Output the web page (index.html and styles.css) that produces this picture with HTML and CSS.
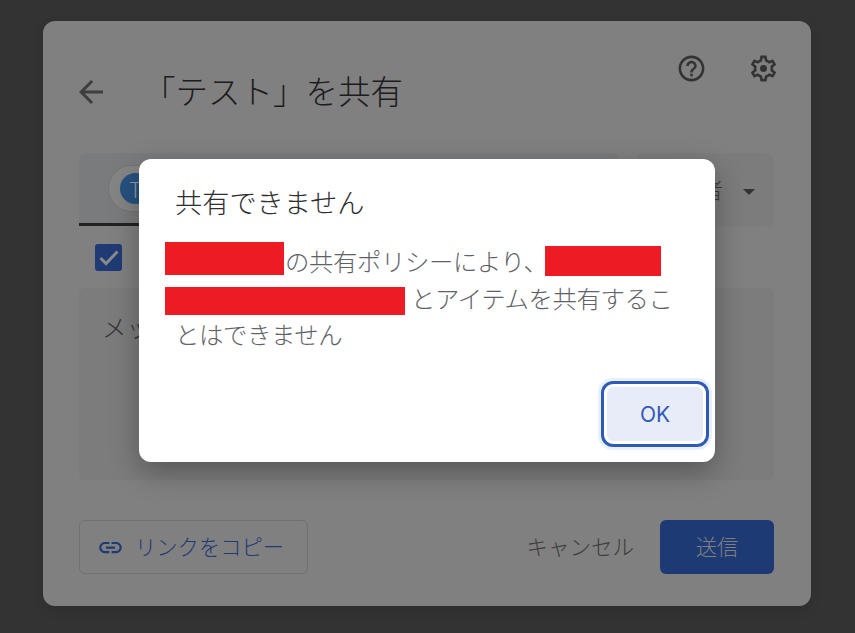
FILE: index.html
```html
<!DOCTYPE html>
<html lang="ja">
<head>
<meta charset="utf-8">
<title>「テスト」を共有</title>
<link rel="stylesheet" href="styles.css">
</head>
<body>
<main class="card">
  <header class="header">
    <div class="heading">
      <svg class="icon-back" viewBox="0 0 24 24"><path d="M20 11H7.830l5.590-5.590L12 4l-8 8 8 8 1.410-1.410L7.830 13H20v-2z"/></svg>
      <h1 class="title">「テスト」を共有</h1>
    </div>
    <div class="actions">
      <svg class="icon-action" viewBox="0 0 24 24"><path d="M11 18h2v-2h-2v2zm1-16C6.480 2 2 6.480 2 12s4.480 10 10 10 10-4.480 10-10S17.520 2 12 2zm0 18c-4.410 0-8-3.590-8-8s3.590-8 8-8 8 3.590 8 8-3.590 8-8 8zm0-14c-2.210 0-4 1.790-4 4h2c0-1.100.9-2 2-2s2 .9 2 2c0 2-3 1.750-3 5h2c0-2.250 3-2.500 3-5 0-2.210-1.790-4-4-4z"/></svg>
      <svg class="icon-action" viewBox="0 0 24 24"><path d="M19.43 12.98c.04-.32.07-.64.07-.98 0-.34-.03-.66-.07-.98l2.11-1.65c.19-.15.24-.42.12-.64l-2-3.46c-.09-.16-.26-.25-.44-.25-.06 0-.12.01-.17.03l-2.49 1c-.52-.4-1.08-.73-1.69-.98l-.38-2.65C14.46 2.18 14.25 2 14 2h-4c-.25 0-.46.18-.49.42l-.38 2.65c-.61.25-1.17.59-1.69.98l-2.49-1c-.06-.02-.12-.03-.18-.03-.17 0-.34.09-.43.25l-2 3.46c-.13.22-.07.49.12.64l2.11 1.65c-.04.32-.07.65-.07.98 0 .33.03.66.07.98l-2.11 1.65c-.19.15-.24.42-.12.64l2 3.46c.09.16.26.25.44.25.06 0 .12-.01.17-.03l2.49-1c.52.4 1.08.73 1.69.98l.38 2.65c.03.24.24.42.49.42h4c.25 0 .46-.18.49-.42l.38-2.65c.61-.25 1.17-.59 1.69-.98l2.49 1c.06.02.12.03.18.03.17 0 .34-.09.43-.25l2-3.46c.12-.22.07-.49-.12-.64l-2.11-1.65zm-1.98-1.71c.04.31.05.52.05.73 0 .21-.02.43-.05.73l-.14 1.13.89.7 1.08.84-.7 1.21-1.27-.51-1.04-.42-.9.68c-.43.32-.84.56-1.25.73l-1.06.43-.16 1.13-.2 1.35h-1.4l-.19-1.35-.16-1.13-1.06-.43c-.43-.18-.83-.41-1.23-.71l-.91-.7-1.06.43-1.27.51-.7-1.21 1.08-.84.89-.7-.14-1.13c-.03-.31-.05-.54-.05-.74s.02-.43.05-.73l.14-1.13-.89-.7-1.08-.84.7-1.21 1.27.51 1.04.42.9-.68c.43-.32.84-.56 1.25-.73l1.06-.43.16-1.13.2-1.35h1.39l.19 1.35.16 1.13 1.06.43c.43.18.83.41 1.23.71l.91.7 1.06-.43 1.27-.51.7 1.21-1.07.85-.89.7.14 1.13z"/><circle cx="12" cy="12" r="2.700"/></svg>
    </div>
  </header>

  <section class="recipients">
    <div class="field">
      <div class="chip"><span class="avatar">T</span></div>
    </div>
    <div class="role">
      <span class="role-text">編集者</span>
      <span class="caret"></span>
    </div>
  </section>

  <div class="notify">
    <span class="checkbox">
      <svg class="check" viewBox="0 0 27 27"><path d="M5.500 14l5.500 5.500L22.500 7.500"/></svg>
    </span>
  </div>

  <div class="message">メッセージ</div>

  <footer class="footer">
    <button class="copy-link">
      <svg class="icon-link" viewBox="0 0 24 24"><path d="M3.900 12c0-1.710 1.390-3.100 3.100-3.100h4V7H7c-2.760 0-5 2.240-5 5s2.240 5 5 5h4v-1.900H7c-1.710 0-3.100-1.390-3.100-3.100zM8 13h8v-2H8v2zm9-6h-4v1.900h4c1.710 0 3.100 1.390 3.100 3.100s-1.390 3.100-3.100 3.100h-4V17h4c2.760 0 5-2.240 5-5s-2.240-5-5-5z"/></svg>
      <span class="label">リンクをコピー</span>
    </button>
    <div class="footer-actions">
      <button class="cancel"><span class="label">キャンセル</span></button>
      <button class="send"><span class="label">送信</span></button>
    </div>
  </footer>

  <div class="modal" role="dialog">
    <h2 class="modal-title">共有できません</h2>
    <p class="modal-body"><span class="redact redact-a"></span>の共有ポリシーにより、<span class="redact redact-b"></span><br><span class="redact redact-c"></span>とアイテムを共有するこ<br>とはできません</p>
    <div class="modal-actions">
      <button class="ok">OK</button>
    </div>
  </div>
</main>
</body>
</html>
```

FILE: styles.css
```css
* {
  box-sizing: border-box;
}

html,
body {
  height: 100%;
}

body {
  margin: 0;
  padding: 21px 44px 27px 43px;
  background: #333;
  overflow: hidden;
  font-family: "Noto Sans CJK JP", "Noto Sans", sans-serif;
  font-weight: 300;
}

button {
  font: inherit;
  border: 0;
  background: none;
  padding: 0;
}

.label {
  display: block;
  margin-top: -4px;
}

.card {
  position: relative;
  width: 768px;
  height: 585px;
  padding: 30px 37px 32px 36px;
  background: #808080;
  border-radius: 12px;
  box-shadow: 0 4px 12px rgba(0, 0, 0, 0.12);
}

.header {
  display: flex;
  justify-content: space-between;
  height: 102px;
}

.heading {
  display: flex;
  align-items: center;
  height: 82px;
}

.icon-back {
  width: 36px;
  height: 36px;
  margin: 0 34px 0 -6px;
  fill: #3e3e3e;
  flex: none;
}

.title {
  margin: -4px 0 0;
  font-size: 32.500px;
  font-weight: 300;
  line-height: 46px;
  color: #1c1c1c;
}

.actions {
  display: flex;
  gap: 41px;
  height: 31px;
  margin: 2px -5px 0 0;
}

.icon-action {
  width: 31px;
  height: 31px;
  fill: #333;
}

.recipients {
  display: flex;
  gap: 16px;
  height: 74px;
}

.field {
  flex: none;
  width: 541px;
  height: 73px;
  padding: 12px 29px;
  background: #797b7d;
  border-bottom: 3px solid #222;
  border-radius: 8px 8px 0 0;
}

.chip {
  display: flex;
  align-items: center;
  width: 220px;
  height: 47px;
  padding-left: 11px;
  background: #858585;
  border: 1px solid #747474;
  border-radius: 24px;
}

.avatar {
  display: flex;
  align-items: center;
  justify-content: center;
  width: 31px;
  height: 31px;
  border-radius: 50%;
  background: #27527f;
  color: #8f9ba6;
  font-size: 21px;
}

.role {
  display: flex;
  align-items: center;
  justify-content: flex-end;
  gap: 20px;
  flex: 1;
  padding-right: 19px;
  background: #7c7c7c;
  border-radius: 8px;
  font-size: 21.500px;
  color: #3a3a3a;
}

.role-text {
  margin-top: -4px;
}

.caret {
  width: 0;
  height: 0;
  margin-top: 3px;
  border-left: 6px solid transparent;
  border-right: 6px solid transparent;
  border-top: 6px solid #333;
}

.notify {
  height: 61px;
  padding: 17px 0 0 16px;
}

.checkbox {
  display: block;
  width: 27px;
  height: 27px;
  background: #1f3a75;
  border-radius: 3px;
}

.check {
  display: block;
  fill: none;
  stroke: #8a8a8a;
  stroke-width: 3;
}

.message {
  height: 192px;
  padding: 21px 23px;
  background: #7c7c7c;
  border-radius: 6px;
  font-size: 24.400px;
  line-height: 36px;
  color: #333;
}

.footer {
  display: flex;
  justify-content: space-between;
  align-items: center;
  height: 54px;
  margin-top: 40px;
}

.copy-link {
  display: flex;
  align-items: center;
  gap: 11px;
  width: 229px;
  height: 54px;
  padding-left: 17px;
  border: 1px solid #717171;
  border-radius: 6px;
  font-size: 21.300px;
  color: #1f3a75;
}

.icon-link {
  width: 27px;
  height: 27px;
  fill: #1f3a75;
  flex: none;
}

.footer-actions {
  display: flex;
  align-items: center;
  gap: 26px;
}

.cancel {
  font-size: 21.500px;
  color: #3c3c3c;
}

.send {
  width: 114px;
  height: 54px;
  border-radius: 6px;
  background: #1e3a74;
  font-size: 21.300px;
  color: #808080;
}

.modal {
  position: absolute;
  left: 96px;
  top: 138px;
  width: 576px;
  height: 303px;
  padding: 0 12px 21px 36px;
  display: flex;
  flex-direction: column;
  background: #fff;
  border-radius: 12px;
  box-shadow: 0 10px 30px rgba(0, 0, 0, 0.3);
}

.modal-title {
  margin: 22px 0 0;
  font-size: 27.200px;
  font-weight: 300;
  line-height: 40px;
  color: #2e2e2e;
}

.modal-body {
  margin: 22px 0 0;
  font-size: 24.400px;
  letter-spacing: -0.4px;
  line-height: 36.500px;
  color: #5f6368;
}

.redact {
  display: inline-block;
  vertical-align: middle;
  background: #ed1c24;
}

.redact-a {
  width: 119px;
  height: 33px;
  margin: -18px 1px -6px -10px;
}

.redact-b {
  width: 116px;
  height: 30px;
  margin: -12px 0 -6px -2px;
}

.redact-c {
  width: 240px;
  height: 28px;
  margin: -6px 6px -6px -10px;
}

.modal-actions {
  display: flex;
  justify-content: flex-end;
  margin-top: auto;
}

.ok {
  width: 96px;
  height: 54px;
  border-radius: 6px;
  background: #e8ecf8;
  color: #3159b8;
  font-family: Inter, "Noto Sans", sans-serif;
  font-size: 21px;
  font-weight: 400;
  box-shadow: 0 0 0 3px #fff, 0 0 0 6px #2f5bb7, 0 0 0 9px #e8f0fe;
}
```
